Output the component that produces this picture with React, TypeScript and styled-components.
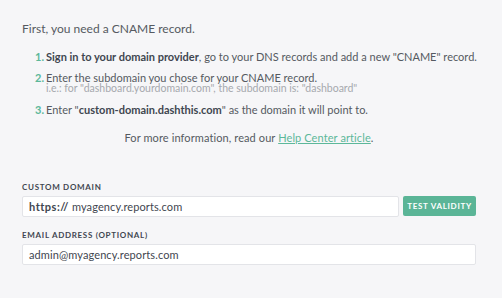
import React from 'react'
import styled, { createGlobalStyle } from 'styled-components'

const GlobalStyle = createGlobalStyle`
    html, body {
        margin: 0;
        padding: 0;
        background: #f6f6f8;
    }
    body {
        font-family: Lato, 'Liberation Sans', sans-serif;
        color: #555a61;
    }
`

const steps = [
    {
        n: 1,
        body: (
            <>
                <b>Sign in to your domain provider</b>, go to your DNS records
                and add a new "CNAME" record.
            </>
        ),
    },
    {
        n: 2,
        body: <>Enter the subdomain you chose for your CNAME record.</>,
        hint: 'i.e.: for "dashboard.yourdomain.com", the subdomain is: "dashboard"',
    },
    {
        n: 3,
        body: (
            <>
                Enter "<b>custom-domain.dashthis.com</b>" as the domain it will
                point to.
            </>
        ),
    },
]

const App: React.FC = () => {
    return (
        <>
            <GlobalStyle />
            <Page>
                <Title>First, you need a CNAME record.</Title>
                <Steps>
                    {steps.map((step) => (
                        <Step key={step.n}>
                            <Num>{step.n}.</Num>
                            <div>
                                <div>{step.body}</div>
                                {step.hint && <Hint>{step.hint}</Hint>}
                            </div>
                        </Step>
                    ))}
                </Steps>
                <MoreInfo>
                    For more information, read our <a href="#">Help Center article</a>.
                </MoreInfo>
                <Field>
                    <Label>Custom domain</Label>
                    <InputRow>
                        <InputBox>
                            <Prefix>https://</Prefix>
                            <span>myagency.reports.com</span>
                        </InputBox>
                        <Button>Test validity</Button>
                    </InputRow>
                </Field>
                <Field>
                    <Label>Email address (optional)</Label>
                    <InputBox>admin@myagency.reports.com</InputBox>
                </Field>
            </Page>
        </>
    )
}

export default App

const Page = styled.div`
    width: 454px;
    padding: 21px 26px 0 22px;
    display: flex;
    flex-direction: column;
`

const Title = styled.div`
    font-size: 12px;
    line-height: 15px;
`

const Steps = styled.div`
    margin-top: 15px;
    padding-left: 13px;
    display: flex;
    flex-direction: column;
    gap: 10px;
    font-size: 11px;
    line-height: 11px;
`

const Step = styled.div`
    display: flex;
    gap: 2px;
    white-space: nowrap;
    b {
        font-weight: 700;
        color: #3f4650;
    }
`

const Num = styled.span`
    color: #5cb89a;
    font-weight: 700;
`

const Hint = styled.div`
    color: #a6a9ae;
    font-size: 10.5px;
    line-height: 11px;
`

const MoreInfo = styled.div`
    margin-top: 16px;
    text-align: center;
    font-size: 11px;
    line-height: 13px;
    letter-spacing: 0.1px;
    a {
        color: #5cb89a;
        text-decoration: underline;
    }
`

const Field = styled.div`
    margin-top: 39px;
    display: flex;
    flex-direction: column;
    & + & {
        margin-top: 14px;
    }
`

const Label = styled.div`
    font-size: 8px;
    line-height: 9px;
    font-weight: 700;
    letter-spacing: 0.7px;
    text-transform: uppercase;
    color: #3f4650;
    margin-bottom: 4px;
`

const InputRow = styled.div`
    display: flex;
    gap: 4px;
    align-items: flex-start;
`

const InputBox = styled.div`
    flex: 1 1 auto;
    height: 21px;
    box-sizing: border-box;
    background: #fff;
    border: 1px solid #e3e4e8;
    border-radius: 2px;
    padding: 0 6px;
    display: flex;
    align-items: center;
    gap: 3px;
    font-size: 11px;
    letter-spacing: 0.1px;
    color: #3f4650;
`

const Prefix = styled.span`
    font-weight: 700;
    letter-spacing: 0.5px;
    color: #3f4650;
`

const Button = styled.button`
    width: 73px;
    height: 20px;
    border: none;
    border-radius: 2px;
    background: #5bb597;
    color: #fff;
    font-family: inherit;
    font-size: 8px;
    font-weight: 700;
    letter-spacing: 0.7px;
    text-transform: uppercase;
    padding: 0;
`
